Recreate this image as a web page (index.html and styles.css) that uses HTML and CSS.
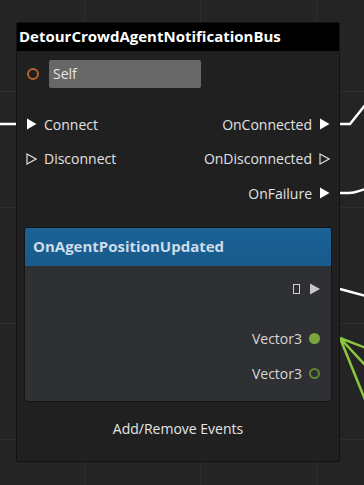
FILE: index.html
```html
<!DOCTYPE html>
<html lang="en">
<head>
  <meta charset="UTF-8" />
  <title>Script Canvas Node</title>
  <link rel="stylesheet" href="styles.css">
</head>
<body>

  <!-- Connections behind the node -->
  <svg class="wires" width="364" height="485" viewBox="0 0 364 485">
    <path d="M0 124 H17" stroke="#fff" stroke-width="2.5" fill="none"/>
    <path d="M338 124 H350 L366 104" stroke="#fff" stroke-width="2.5" fill="none"/>
    <path d="M338 193 H349 C356 193 360 190 366 189" stroke="#fff" stroke-width="2.5" fill="none"/>
    <path d="M340 289 L366 296" stroke="#fff" stroke-width="2.5" fill="none"/>
    <path d="M340 338 L366 348 M340 338 L366 366 M340 338 L366 402" stroke="#8cc63f" stroke-width="2.5" fill="none"/>
  </svg>

  <div class="node">
    <header class="node-title">DetourCrowdAgentNotificationBus</header>

    <div class="node-body">
      <div class="self-row">
        <span class="pin-ring"></span>
        <div class="self-field">Self</div>
      </div>

      <div class="slot-row slot-first">
        <div class="slot-in">
          <svg class="tri" width="11" height="12" viewBox="0 0 11 12"><path d="M1 0.5 L10.5 6 L1 11.5 Z" fill="#fff"/></svg>
          <span>Connect</span>
        </div>
        <div class="slot-out">
          <span>OnConnected</span>
          <svg class="tri" width="11" height="12" viewBox="0 0 11 12"><path d="M1 0.5 L10.5 6 L1 11.5 Z" fill="#fff"/></svg>
        </div>
      </div>

      <div class="slot-row">
        <div class="slot-in">
          <svg class="tri" width="11" height="12" viewBox="0 0 11 12"><path d="M1 1 L10 6 L1 11 Z" fill="none" stroke="#ddd" stroke-width="1.2"/></svg>
          <span>Disconnect</span>
        </div>
        <div class="slot-out">
          <span>OnDisconnected</span>
          <svg class="tri" width="11" height="12" viewBox="0 0 11 12"><path d="M1 1 L10 6 L1 11 Z" fill="none" stroke="#ddd" stroke-width="1.2"/></svg>
        </div>
      </div>

      <div class="slot-row">
        <div></div>
        <div class="slot-out">
          <span>OnFailure</span>
          <svg class="tri" width="11" height="12" viewBox="0 0 11 12"><path d="M1 0.5 L10.5 6 L1 11.5 Z" fill="#fff"/></svg>
        </div>
      </div>

      <div class="event">
        <div class="event-title">OnAgentPositionUpdated</div>
        <div class="event-body">
          <div class="event-row exec">
            <span class="box-glyph"></span>
            <svg class="tri" width="12" height="12" viewBox="0 0 12 12"><path d="M1 0.5 L11 6 L1 11.5 Z" fill="#c8c8c8"/></svg>
          </div>
          <div class="event-row data data-first">
            <span>Vector3</span>
            <span class="dot dot-full"></span>
          </div>
          <div class="event-row data">
            <span>Vector3</span>
            <span class="dot dot-empty"></span>
          </div>
        </div>
      </div>

      <div class="add-remove">Add/Remove Events</div>
    </div>
  </div>

</body>
</html>
```

FILE: styles.css
```css
:root {
  --canvas-bg: #242424;
  --grid-line: #2e2e2e;
  --node-bg: #202020;
  --event-bg: #2f3033;
  --event-head: #185b8c;
  --text-color: #e2e2e2;
}

body {
  margin: 0;
  width: 364px;
  height: 485px;
  overflow: hidden;
  position: relative;
  font-family: 'Open Sans', 'Noto Sans', sans-serif;
  background-color: var(--canvas-bg);
  background-image:
    linear-gradient(to right, var(--grid-line) 1px, transparent 1px),
    linear-gradient(to bottom, var(--grid-line) 1px, transparent 1px);
  background-size: 116px 116px;
  background-position: 84px 91px;
  padding-top: 22px;
  box-sizing: border-box;
}

.wires {
  position: absolute;
  left: 0;
  top: 0;
  z-index: 0;
}

.node {
  position: relative;
  z-index: 1;
  margin-left: 16px;
  width: 324px;
  height: 440px;
  box-sizing: border-box;
  background-color: var(--node-bg);
  border: 1px solid #121212;
  border-radius: 2px;
  display: flex;
  flex-direction: column;
}

.node-title {
  height: 28px;
  background-color: #000;
  color: #fff;
  font-weight: bold;
  font-size: 15px;
  line-height: 27px;
  padding-left: 2px;
}

.node-body {
  flex: 1;
  display: flex;
  flex-direction: column;
  color: var(--text-color);
  font-size: 14px;
}

.self-row {
  display: flex;
  align-items: center;
  height: 28px;
  margin-top: 9px;
  padding-left: 10px;
}

.pin-ring {
  width: 12px;
  height: 12px;
  box-sizing: border-box;
  border: 2px solid #b4632b;
  border-radius: 50%;
}

.self-field {
  margin-left: 10px;
  width: 152px;
  height: 28px;
  box-sizing: border-box;
  background-color: #676767;
  border-radius: 2px;
  color: #e6e6e6;
  padding-left: 4px;
  line-height: 28px;
  font-size: 14px;
}

.slot-row {
  display: flex;
  justify-content: space-between;
  align-items: center;
  height: 34.5px;
  padding: 0 9px 0 9px;
}

.slot-first {
  margin-top: 19px;
}

.slot-in,
.slot-out {
  display: flex;
  align-items: center;
  gap: 7px;
}

.tri {
  display: block;
}

.event {
  margin: 16px 7px 0;
  height: 173px;
  border: 1px solid #151515;
  border-radius: 3px;
  background-color: var(--event-bg);
  overflow: hidden;
  display: flex;
  flex-direction: column;
}

.event-title {
  height: 38px;
  background: linear-gradient(to bottom, #1b6296, var(--event-head));
  color: #cddceb;
  font-weight: bold;
  font-size: 15px;
  line-height: 37px;
  padding-left: 8px;
}

.event-body {
  display: flex;
  flex-direction: column;
  padding-top: 6px;
}

.event-row {
  display: flex;
  justify-content: flex-end;
  align-items: center;
  gap: 7px;
  padding-right: 11px;
  color: #d6d6d6;
}

.event-row.exec {
  height: 34px;
  padding-right: 10px;
  gap: 9px;
}

.event-row.data {
  height: 35px;
}

.data-first {
  margin-top: 15px;
}

.box-glyph {
  width: 5px;
  height: 8px;
  border: 1px solid #cfcfcf;
}

.dot {
  width: 11px;
  height: 11px;
  border-radius: 50%;
  box-sizing: border-box;
}

.dot-full {
  background-color: #7aa53c;
}

.dot-empty {
  border: 2px solid #5f8636;
}

.add-remove {
  text-align: center;
  margin-top: 17px;
  line-height: 19px;
  font-size: 14px;
  color: #e6e6e6;
}
```
